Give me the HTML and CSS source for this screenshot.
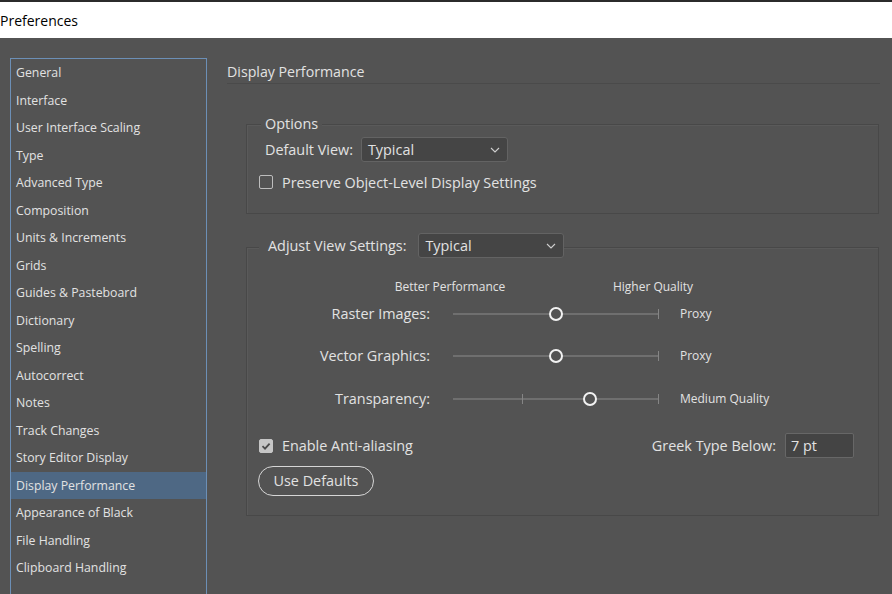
FILE: index.html
```html
<!DOCTYPE html>
<html>
<head>
<meta charset="utf-8">
<link rel="stylesheet" href="styles.css">
</head>
<body>
<div class="titlebar">Preferences</div>
<div class="main">
  <ul class="sidebar">
    <li>General</li>
    <li>Interface</li>
    <li>User Interface Scaling</li>
    <li>Type</li>
    <li>Advanced Type</li>
    <li>Composition</li>
    <li>Units &amp; Increments</li>
    <li>Grids</li>
    <li>Guides &amp; Pasteboard</li>
    <li>Dictionary</li>
    <li>Spelling</li>
    <li>Autocorrect</li>
    <li>Notes</li>
    <li>Track Changes</li>
    <li>Story Editor Display</li>
    <li class="active">Display Performance</li>
    <li>Appearance of Black</li>
    <li>File Handling</li>
    <li>Clipboard Handling</li>
  </ul>
  <div class="content">
    <div class="heading">Display Performance</div>

    <div class="group group-options">
      <div class="legend">Options</div>
      <div class="row-select">
        <span class="label">Default View:</span>
        <div class="select select-default"><span>Typical</span>
          <svg class="chev" width="10" height="6" viewBox="0 0 10 6"><path d="M1 1 L5 5 L9 1" fill="none" stroke="#cfcfcf" stroke-width="1.1"/></svg>
        </div>
      </div>
      <div class="check-row">
        <span class="checkbox"></span>
        <span>Preserve Object-Level Display Settings</span>
      </div>
    </div>

    <div class="group group-adjust">
      <div class="header-row">
        <span class="label cut">Adjust View Settings:</span>
        <div class="select select-adjust"><span>Typical</span>
          <svg class="chev" width="10" height="6" viewBox="0 0 10 6"><path d="M1 1 L5 5 L9 1" fill="none" stroke="#cfcfcf" stroke-width="1.1"/></svg>
        </div>
      </div>
      <div class="sliders">
        <div></div>
        <div class="scale-labels">
          <span class="end-label first"><span>Better Performance</span></span>
          <span class="end-label last"><span>Higher Quality</span></span>
        </div>
        <div></div>

        <div class="s-label">Raster Images:</div>
        <div class="track"><span class="end-tick"></span><span class="thumb" style="left:50%"></span></div>
        <div class="s-value">Proxy</div>

        <div class="s-label mid">Vector Graphics:</div>
        <div class="track mid"><span class="end-tick"></span><span class="thumb" style="left:50%"></span></div>
        <div class="s-value mid">Proxy</div>

        <div class="s-label last">Transparency:</div>
        <div class="track last"><span class="mid-tick" style="left:33.3%"></span><span class="end-tick"></span><span class="thumb" style="left:66.7%"></span></div>
        <div class="s-value last">Medium Quality</div>
      </div>

      <div class="aa-row">
        <div class="check-row">
          <span class="checkbox checked">
            <svg width="12" height="12" viewBox="0 0 12 12"><path d="M2.5 6.2 L5 8.6 L9.6 3.6" fill="none" stroke="#4a4a4a" stroke-width="1.8"/></svg>
          </span>
          <span>Enable Anti-aliasing</span>
        </div>
        <div class="greek">
          <span>Greek Type Below:</span>
          <span class="input">7 pt</span>
        </div>
      </div>
      <div class="btn">Use Defaults</div>
    </div>
  </div>
</div>
</body>
</html>
```
FILE: styles.css
```css
* { box-sizing: border-box; }
html, body { margin: 0; padding: 0; }
body {
  width: 892px;
  height: 594px;
  overflow: hidden;
  background: #535353;
  font-family: "Open Sans", "Noto Sans", sans-serif;
  color: #e2e2e2;
}
.titlebar {
  height: 38px;
  border-top: 2px solid #2b2b2b;
  background: #ffffff;
  color: #000;
  font-size: 14px;
  line-height: 37px;
}
.main {
  display: flex;
  height: 556px;
}
.sidebar {
  list-style: none;
  margin: 20px 0 0 10px;
  padding: 0;
  width: 197px;
  height: 560px;
  flex: none;
  border: 1px solid #6c8fb6;
  border-bottom: none;
  font-size: 12.3px;
}
.sidebar li {
  height: 27.5px;
  line-height: 28px;
  padding-left: 5px;
  white-space: nowrap;
}
.sidebar li.active {
  background: #4e6884;
}
.content {
  flex: 1;
  padding-left: 20px;
}
.heading {
  margin-top: 24px;
  font-size: 14.2px;
  line-height: 20px;
  padding-bottom: 1px;
  border-bottom: 1px solid #4a4a4a;
  margin-right: 12px;
}
.group {
  margin-left: 19px;
  margin-right: 13px;
  border: 1px solid #484848;
  box-shadow: inset 1px 1px 0 #5a5a5a;
  padding-left: 12px;
  font-size: 14.4px;
}
.group-options {
  margin-top: 40px;
  padding-bottom: 21px;
}
.legend {
  display: block;
  width: max-content;
  margin-top: -11px;
  margin-left: 2px;
  padding: 0 4px;
  line-height: 20px;
  height: 20px;
  background: #535353;
}
.row-select {
  display: flex;
  align-items: center;
  margin-top: 3px;
  margin-left: 6px;
  height: 25px;
  gap: 8px;
}
.select {
  height: 25px;
  display: flex;
  align-items: center;
  justify-content: space-between;
  background: #454545;
  border: 1px solid #636363;
  border-radius: 3px;
  padding: 0 6px;
}
.select-default { width: 147px; }
.select-adjust { width: 146px; }
.chev { margin-right: 1px; }
.check-row {
  display: flex;
  align-items: center;
  gap: 9px;
  height: 20px;
}
.group-options .check-row { margin-top: 10px; }
.checkbox {
  width: 14px;
  height: 14px;
  border: 1px solid #bdbdbd;
  border-radius: 2px;
  display: flex;
  align-items: center;
  justify-content: center;
}
.checkbox.checked {
  background: #c6c6c6;
  border-color: #c6c6c6;
}
.group-adjust {
  margin-top: 33px;
  padding-right: 24px;
  padding-bottom: 19px;
}
.header-row {
  display: flex;
  align-items: center;
  margin-top: -15px;
  height: 25px;
}
.label.cut {
  background: #535353;
  padding: 0 12px 0 9px;
  line-height: 20px;
}
.sliders {
  display: grid;
  grid-template-columns: 194px 206px auto;
  column-gap: 0;
  margin-top: 21px;
}
.scale-labels {
  display: flex;
  justify-content: space-between;
  height: 16px;
  font-size: 12px;
  line-height: 16px;
}
.end-label {
  width: 0;
  display: flex;
  justify-content: center;
  white-space: nowrap;
}
.end-label.first { margin-left: -3px; }
.end-label.last { margin-right: 6px; }
.s-label, .s-value, .track {
  height: 20px;
  margin-top: 9px;
}
.s-label.mid, .s-value.mid, .track.mid { margin-top: 22px; }
.s-label.last, .s-value.last, .track.last { margin-top: 23px; }
.s-label {
  text-align: right;
  padding-right: 23px;
  line-height: 20px;
  white-space: nowrap;
}
.s-value {
  font-size: 12px;
  padding-left: 21px;
  line-height: 20px;
  white-space: nowrap;
}
.track {
  position: relative;
}
.track::before {
  content: "";
  position: absolute;
  left: 0;
  right: 0;
  top: 9px;
  height: 2px;
  background: #6f6f6f;
}
.end-tick, .mid-tick {
  position: absolute;
  top: 5px;
  width: 1px;
  height: 10px;
  background: #858585;
}
.end-tick { right: 0; }
.thumb {
  position: absolute;
  top: 3px;
  width: 14px;
  height: 14px;
  margin-left: -7px;
  border: 2.5px solid #f2f2f2;
  border-radius: 50%;
  background: #535353;
}
.aa-row {
  display: flex;
  align-items: center;
  justify-content: space-between;
  margin-top: 24px;
  height: 25px;
}
.greek {
  display: flex;
  align-items: center;
  gap: 9px;
}
.input {
  width: 69px;
  height: 25px;
  line-height: 23px;
  background: #444444;
  border: 1px solid #676767;
  border-radius: 2px;
  padding-left: 5px;
}
.btn {
  margin-top: 8px;
  margin-left: -1px;
  width: 116px;
  height: 30px;
  line-height: 28px;
  text-align: center;
  border: 1px solid #d6d6d6;
  border-radius: 15px;
}
```
